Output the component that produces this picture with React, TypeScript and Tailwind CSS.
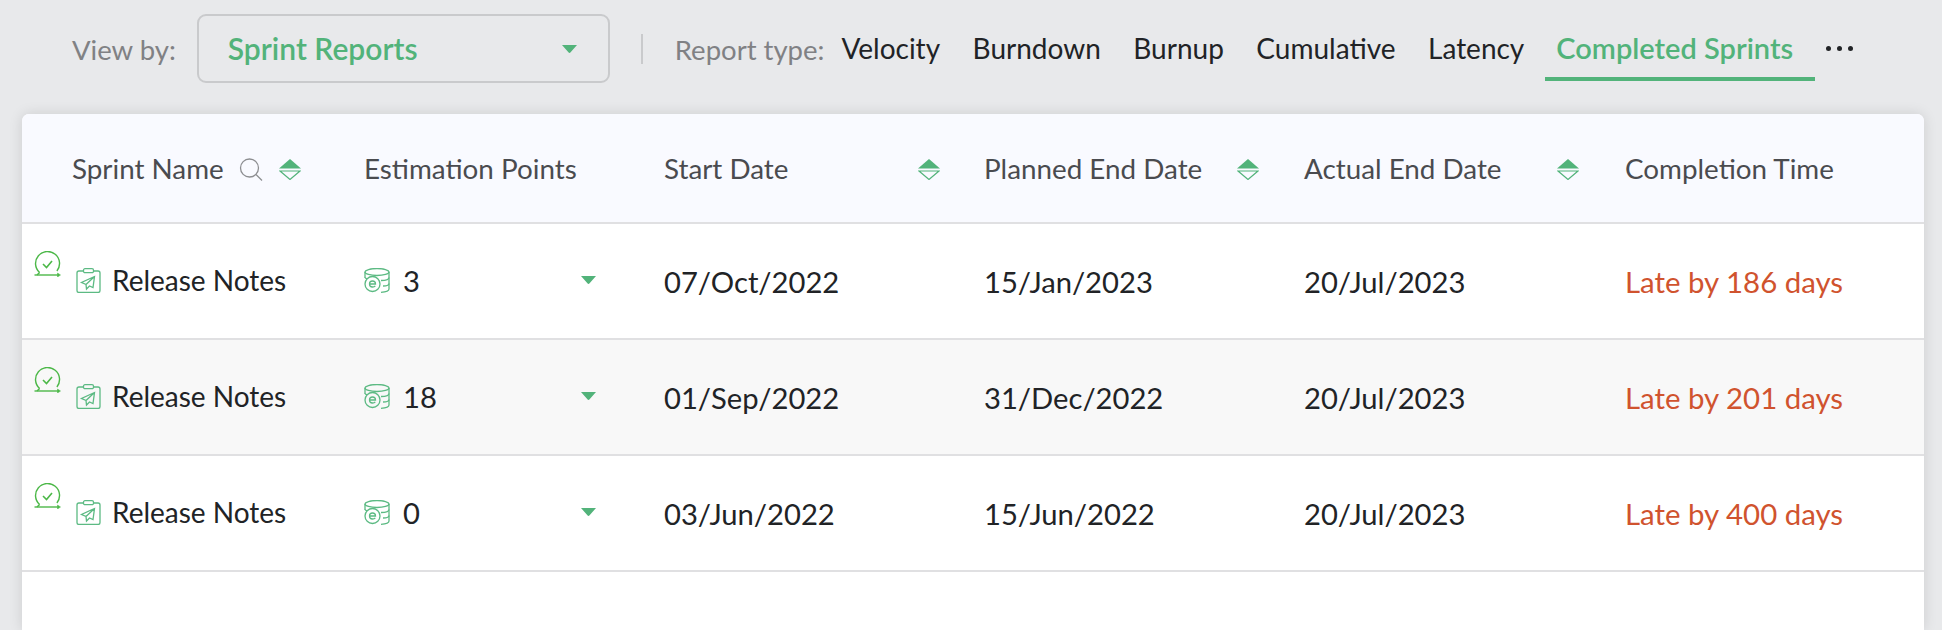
import React from "react"

const rows = [
  { points: "3", start: "07/Oct/2022", planned: "15/Jan/2023", actual: "20/Jul/2023", late: "Late by 186 days", alt: false },
  { points: "18", start: "01/Sep/2022", planned: "31/Dec/2022", actual: "20/Jul/2023", late: "Late by 201 days", alt: true },
  { points: "0", start: "03/Jun/2022", planned: "15/Jun/2022", actual: "20/Jul/2023", late: "Late by 400 days", alt: false },
]

const tabs = ["Velocity", "Burndown", "Burnup", "Cumulative", "Latency"]

function Caret({ className }: { className: string }) {
  return (
    <svg viewBox="0 0 15 8" className={className}>
      <path d="M0 0h15L8.6 7.2a1.4 1.4 0 0 1-2.2 0z" fill="#52b37a" />
    </svg>
  )
}

function SortIcon() {
  return (
    <svg viewBox="0 0 22 21" className="w-[22px] h-[21px] shrink-0">
      <path d="M11 0L22 9.500H0z" fill="#52b37a" />
      <path d="M1 12h20L11 20.500z" fill="none" stroke="#52b37a" strokeWidth="1.200" />
    </svg>
  )
}

function SearchIcon() {
  return (
    <svg viewBox="0 0 24 23" className="w-6 h-[23px] shrink-0" fill="none" stroke="#8d8e91" strokeWidth="1.3">
      <circle cx="10.5" cy="10" r="9" />
      <path d="M17 16.5l6 6" />
    </svg>
  )
}

function DoneIcon() {
  return (
    <svg viewBox="0 0 27 26" className="absolute left-3 top-[27px] w-[27px] h-[26px]" fill="none" stroke="#4cb848" strokeWidth="1.4">
      <path d="M5.600 21.500A12 12 0 1 1 22.900 20" />
      <path d="M5.600 21.500L3 24" />
      <path d="M9 13l3.500 3.500 5.500-6.500" strokeWidth="1.600" />
      <path d="M0.500 24h24" />
      <path d="M23.500 22l3 2-3 2z" fill="#4cb848" strokeWidth="0.5" />
    </svg>
  )
}

function ReleaseIcon() {
  return (
    <svg viewBox="0 0 25 25" className="w-[25px] h-[25px] shrink-0" fill="none" stroke="#5cba83" strokeWidth="1.3">
      <path d="M7.5 3H3a2 2 0 0 0-2 2v17.5a2 2 0 0 0 2 2h19a2 2 0 0 0 2-2V5a2 2 0 0 0-2-2h-4.500" />
      <rect x="7.500" y="0.700" width="10" height="4" rx="1.500" />
      <path d="M18.500 8.500L5.500 14.500l4.500 2 .5 4.500 3-3 3.500 1.500zM10 16.500l8.500-8" />
    </svg>
  )
}

function PointsIcon() {
  return (
    <svg viewBox="0 0 26 25" className="w-[26px] h-[25px] shrink-0" fill="none" stroke="#5cba83" strokeWidth="1.3">
      <ellipse cx="13" cy="4" rx="12" ry="3.500" />
      <path d="M1 4v6M25 4v17c0 1.800-4 3-8 3.300" />
      <path d="M17 12.500c4 0 8-1 8-3M19 18c3 0 6-.7 6-2.500M1 9.500c.4.600 1 1 2 1.400" />
      <circle cx="8.500" cy="16" r="7.500" />
      <path d="M5.500 16h6c0-2-1.300-3-3-3s-3 1.300-3 3 1.300 3 3 3c1.200 0 2.200-.4 2.800-1.200" />
    </svg>
  )
}

function HeaderCell({ label, search, sort }: { label: string; search?: boolean; sort?: boolean }) {
  return (
    <div className="flex items-center">
      <span className="whitespace-nowrap">{label}</span>
      {search && (
        <span className="ml-[15px] mr-[16px]">
          <SearchIcon />
        </span>
      )}
      {sort && !search && <span className="flex-1" />}
      {sort && <SortIcon />}
    </div>
  )
}

export default function App() {
  return (
    <div className="h-[630px] w-[1942px] overflow-hidden bg-[#e8e9eb] font-['Lato',sans-serif] text-[28px] text-[#212326]">
      {/* Top bar */}
      <div className="flex h-[114px] items-start pl-[72px]">
        <span className="mt-[32px] text-[27.500px] leading-[36px] text-[#808184]">View by:</span>
        <div className="ml-[21px] mt-[14px] flex h-[69px] w-[413px] items-center justify-between rounded-[9px] border-2 border-[#c9cacc] pl-[29px] pr-[31px]">
          <span className="text-[30px] font-semibold text-[#52b37a]">Sprint Reports</span>
          <Caret className="w-[15px] h-2" />
        </div>
        <div className="ml-[31px] mt-[34px] h-[30px] w-0.5 bg-[#c9cacc]" />
        <span className="ml-[32px] mt-[32px] text-[27.500px] leading-[36px] text-[#808184]">Report type:</span>
        <div className="ml-[17px] mt-[30px] flex gap-[32.500px] leading-[36px]">
          {tabs.map((t) => (
            <span key={t} className="whitespace-nowrap">{t}</span>
          ))}
        </div>
        <div className="ml-[21px] mt-[30px] h-[51px] w-[270px] border-b-4 border-[#52b37a] pl-[11px] text-[29px] font-semibold leading-[36px] text-[#52b37a] whitespace-nowrap">
          Completed Sprints
        </div>
        <div className="ml-[11px] mt-[46px] flex gap-[6px]">
          <span className="h-[5px] w-[5px] rounded-full bg-[#212326]" />
          <span className="h-[5px] w-[5px] rounded-full bg-[#212326]" />
          <span className="h-[5px] w-[5px] rounded-full bg-[#212326]" />
        </div>
      </div>

      {/* Table card */}
      <div className="ml-[22px] w-[1902px] h-[516px] rounded-t-[7px] bg-white shadow-[0_0_14px_rgba(0,0,0,0.12)]">
        <div className="grid h-[110px] grid-cols-[292px_300px_320px_320px_321px_1fr] items-center rounded-t-[7px] border-b-2 border-[#e0e0e2] bg-[#f9faff] pl-[50px] pt-[2px] text-[27.800px] text-[#4a4b4f]">
          <HeaderCell label="Sprint Name" search sort />
          <HeaderCell label="Estimation Points" />
          <div className="pr-[44px]"><HeaderCell label="Start Date" sort /></div>
          <div className="pr-[45px]"><HeaderCell label="Planned End Date" sort /></div>
          <div className="pr-[46px]"><HeaderCell label="Actual End Date" sort /></div>
          <HeaderCell label="Completion Time" />
        </div>

        {rows.map((r, i) => (
          <div
            key={i}
            className={`relative grid h-[116px] grid-cols-[292px_300px_320px_320px_321px_1fr] items-center border-b-2 border-[#e0e0e2] pl-[50px] text-[29.200px] ${r.alt ? "bg-[#f8f8f8]" : "bg-white"}`}
          >
            <DoneIcon />
            <div className="ml-1 flex items-center gap-[11px] -mt-[2px] text-[28px]">
              <ReleaseIcon />
              <span className="whitespace-nowrap">Release Notes</span>
            </div>
            <div className="flex items-center pr-[68px]">
              <PointsIcon />
              <span className="ml-[13px] flex-1">{r.points}</span>
              <Caret className="w-[15px] h-2 -mt-[2px]" />
            </div>
            <div className="mt-[2px]">{r.start}</div>
            <div className="mt-[2px]">{r.planned}</div>
            <div className="mt-[2px]">{r.actual}</div>
            <div className="mt-[2px] text-[29.400px] text-[#d0532e] whitespace-nowrap">{r.late}</div>
          </div>
        ))}
      </div>
    </div>
  )
}
